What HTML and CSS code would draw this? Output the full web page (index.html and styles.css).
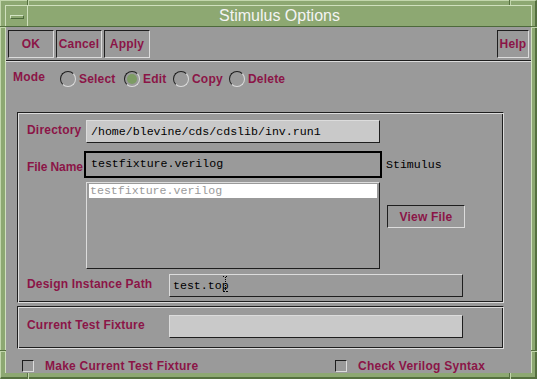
FILE: index.html
```html
<!DOCTYPE html>
<html>
    <head>
        <meta charset="utf-8">
        <title>Stimulus Options</title>
        <link rel="stylesheet" href="styles.css">
    </head>

    <body>
        <div class="frame">
            <!-- cantos da moldura -->
            <span class="notch notch-v top-l"></span>
            <span class="notch notch-v top-r"></span>
            <span class="notch notch-v bot-l"></span>
            <span class="notch notch-v bot-r"></span>
            <span class="notch notch-h left-t"></span>
            <span class="notch notch-h left-b"></span>
            <span class="notch notch-h right-t"></span>
            <span class="notch notch-h right-b"></span>

            <div class="window">
                <header class="titlebar">
                    <div class="menu-btn"><span class="dash"></span></div>
                    <h1 class="title">Stimulus Options</h1>
                </header>

                <main class="dialog">
                    <nav class="toolbar">
                        <button class="tb-btn">OK</button>
                        <button class="tb-btn">Cancel</button>
                        <button class="tb-btn">Apply</button>
                        <button class="tb-btn help">Help</button>
                    </nav>
                    <hr class="separador">

                    <div class="mode-row">
                        <span class="lbl mode-lbl">Mode</span>
                        <label class="radio w-select"><span class="dot"></span>Select</label>
                        <label class="radio w-edit"><span class="dot on"></span>Edit</label>
                        <label class="radio w-copy"><span class="dot"></span>Copy</label>
                        <label class="radio"><span class="dot"></span>Delete</label>
                    </div>

                    <section class="group group-main">
                        <div class="row">
                            <span class="lbl w-dir up">Directory</span>
                            <div class="field light">/home/blevine/cds/cdslib/inv.run1</div>
                        </div>
                        <div class="row row-file">
                            <span class="lbl w-file">File Name</span>
                            <div class="field focus">testfixture.verilog</div>
                            <span class="note">Stimulus</span>
                        </div>
                        <div class="row row-list">
                            <div class="list">
                                <div class="list-item">testfixture.verilog</div>
                            </div>
                            <button class="push">View File</button>
                        </div>
                        <div class="row row-path">
                            <span class="lbl w-path up">Design Instance Path</span>
                            <div class="field dark">test.top
                                <svg class="ibeam" width="5" height="16" viewBox="0 0 5 16">
                                    <path d="M0 0.5h2M3 0.5h2M2.5 1v14" stroke="#000" stroke-width="1" stroke-dasharray="1 1" fill="none"/>
                                    <path d="M0 15.5h2M3 15.5h2" stroke="#000" stroke-width="1" fill="none"/>
                                </svg>
                            </div>
                        </div>
                    </section>

                    <section class="group group-fixture">
                        <div class="row">
                            <span class="lbl w-path up">Current Test Fixture</span>
                            <div class="field light"></div>
                        </div>
                    </section>

                    <div class="checks">
                        <label class="check w-make"><span class="box"></span>Make Current Test Fixture</label>
                        <label class="check"><span class="box"></span>Check Verilog Syntax</label>
                    </div>
                </main>
            </div>
        </div>
    </body>

</html>
```

FILE: styles.css
```css
body {
    margin: 0;
    background-color: #8da872;
    font-family: "Liberation Sans", Arial, sans-serif;
}

/* moldura verde da janela */
.frame {
    box-sizing: border-box;
    position: relative;
    width: 537px;
    height: 379px;
    background-color: #8da872;
    border-style: solid;
    border-width: 1px 2px 2px 1px;
    border-color: #c2d6ac #55703f #55703f #c2d6ac;
    padding: 4px 3px 4px 4px;
}

.notch {
    position: absolute;
    background-color: #55703f;
}

.notch-v {
    width: 1px;
    box-shadow: 1px 0 0 #c2d6ac;
}

.notch-h {
    height: 1px;
    width: 6px;
    box-shadow: 0 1px 0 #c2d6ac;
}

.top-l { left: 26px; top: -1px; height: 5px; }
.top-r { left: 508px; top: -1px; height: 5px; }
.bot-l { left: 26px; bottom: -2px; height: 6px; }
.bot-r { left: 508px; bottom: -2px; height: 6px; }
.left-t { left: -1px; top: 25px; }
.left-b { left: -1px; top: 349px; }
.right-t { right: -2px; top: 25px; }
.right-b { right: -2px; top: 349px; }

.window {
    box-sizing: border-box;
    height: 100%;
    border: 1px solid #cfe0bd;
    display: flex;
    flex-direction: column;
}

.titlebar {
    box-sizing: border-box;
    display: flex;
    height: 21px;
    border-bottom: 1px solid #4d6a3b;
}

.menu-btn {
    box-sizing: border-box;
    width: 22px;
    border-right: 1px solid #cfe0bd;
}

.dash {
    display: block;
    box-sizing: border-box;
    width: 14px;
    height: 4px;
    margin: 9px 0 0 4px;
    border-style: solid;
    border-width: 1px;
    border-color: #d4e4c4 #4d6a3b #4d6a3b #d4e4c4;
}

.title {
    flex: 1;
    margin: 0;
    font-size: 16px;
    font-weight: normal;
    line-height: 20px;
    text-align: center;
    color: #f4f4f4;
}

.dialog {
    flex: 1;
    background-color: #9a9a9a;
}

/* barra de botoes */
.toolbar {
    display: flex;
    gap: 2px;
    padding: 3px 2px 0 2px;
}

button {
    font-family: inherit;
    padding: 0;
    margin: 0;
    background-color: transparent;
}

.tb-btn {
    box-sizing: border-box;
    width: 46px;
    height: 28px;
    border-style: solid;
    border-width: 1px;
    border-color: #1e1e1e #dcdcdc #dcdcdc #1e1e1e;
    font-size: 12px;
    font-weight: bold;
    letter-spacing: 0.2px;
    color: #8b1547;
}

.tb-btn.help {
    width: 32px;
    margin-left: auto;
}

.separador {
    margin: 2px 0 0 0;
    border: 0;
    border-top: 1px solid #1e1e1e;
    border-bottom: 1px solid #dcdcdc;
}

.lbl {
    font-size: 12px;
    font-weight: bold;
    letter-spacing: 0.2px;
    white-space: nowrap;
    color: #8b1547;
    flex: none;
}

.lbl.up {
    margin-top: -3px;
}

/* modo */
.mode-row {
    display: flex;
    align-items: center;
    height: 18px;
    margin-top: 8px;
    padding-left: 7px;
}

.mode-lbl {
    width: 47px;
    margin-top: -5px;
}

.radio {
    display: flex;
    align-items: center;
    gap: 3px;
    font-size: 12px;
    font-weight: bold;
    letter-spacing: 0.2px;
    color: #8b1547;
}

.w-select { width: 64px; }
.w-edit { width: 49px; }
.w-copy { width: 56px; }

.dot {
    box-sizing: border-box;
    display: flex;
    align-items: center;
    justify-content: center;
    width: 16px;
    height: 16px;
    border-radius: 50%;
    border-style: solid;
    border-width: 1px;
    border-color: #1e1e1e #dcdcdc #dcdcdc #1e1e1e;
}

.dot.on::after {
    content: "";
    width: 10px;
    height: 10px;
    border-radius: 50%;
    background-color: #7d9c64;
}

/* grupos */
.group {
    box-sizing: border-box;
    width: 487px;
    margin-left: 11px;
    border-style: solid;
    border-width: 1px;
    border-color: #1e1e1e #dcdcdc #dcdcdc #1e1e1e;
    box-shadow: inset 1px 1px 0 #dcdcdc, inset -1px -1px 0 #1e1e1e;
    padding-left: 9px;
}

.group-main {
    height: 191px;
    margin-top: 24px;
    padding-top: 7px;
}

.group-fixture {
    height: 43px;
    margin-top: 3px;
    padding-top: 8px;
}

.row {
    display: flex;
    align-items: center;
}

.w-dir { width: 59px; }
.w-file { width: 57px; margin-top: 4px; letter-spacing: -0.1px; }
.w-path { width: 142px; }

.field {
    box-sizing: border-box;
    position: relative;
    width: 294px;
    height: 23px;
    padding-left: 4px;
    font-family: "Liberation Mono", "Courier New", monospace;
    font-size: 11.6px;
    line-height: 22px;
    color: #000;
    border-style: solid;
    border-width: 1px;
    border-color: #dcdcdc #1e1e1e #1e1e1e #dcdcdc;
}

.field.light {
    background-color: #c9c9c9;
}

.field.dark {
    padding-left: 3px;
    background-color: #9a9a9a;
}

.field.focus {
    width: 298px;
    height: 27px;
    padding-left: 5px;
    border: 2px solid #000;
    line-height: 22px;
    background-color: #9a9a9a;
}

.row-file {
    margin-top: 8px;
}

.note {
    margin-left: 4px;
    font-family: "Liberation Mono", "Courier New", monospace;
    font-size: 11.6px;
    color: #000;
}

.row-list {
    align-items: flex-start;
    margin-top: 4px;
    padding-left: 59px;
}

.list {
    box-sizing: border-box;
    width: 294px;
    height: 87px;
    padding: 1px 2px;
    border-style: solid;
    border-width: 1px;
    border-color: #dcdcdc #1e1e1e #1e1e1e #dcdcdc;
}

.list-item {
    height: 14px;
    padding-left: 1px;
    background-color: #fff;
    font-family: "Liberation Mono", "Courier New", monospace;
    font-size: 11.6px;
    line-height: 14px;
    color: #9a9a9a;
}

.push {
    box-sizing: border-box;
    width: 78px;
    height: 23px;
    margin: 23px 0 0 7px;
    border-style: solid;
    border-width: 1px;
    border-color: #1e1e1e #dcdcdc #dcdcdc #1e1e1e;
    font-size: 12px;
    font-weight: bold;
    letter-spacing: 0.2px;
    color: #8b1547;
}

.row-path {
    margin-top: 5px;
}

.ibeam {
    position: absolute;
    left: 53px;
    top: 1px;
}

/* caixas de selecao */
.checks {
    display: flex;
    margin-top: 10px;
    padding-left: 16px;
}

.check {
    display: flex;
    align-items: center;
    gap: 11px;
    font-size: 12px;
    font-weight: bold;
    letter-spacing: 0.25px;
    color: #8b1547;
}

.w-make { width: 313px; }

.box {
    box-sizing: border-box;
    width: 12px;
    height: 12px;
    border-style: solid;
    border-width: 1px;
    border-color: #1e1e1e #dcdcdc #dcdcdc #1e1e1e;
}
```
